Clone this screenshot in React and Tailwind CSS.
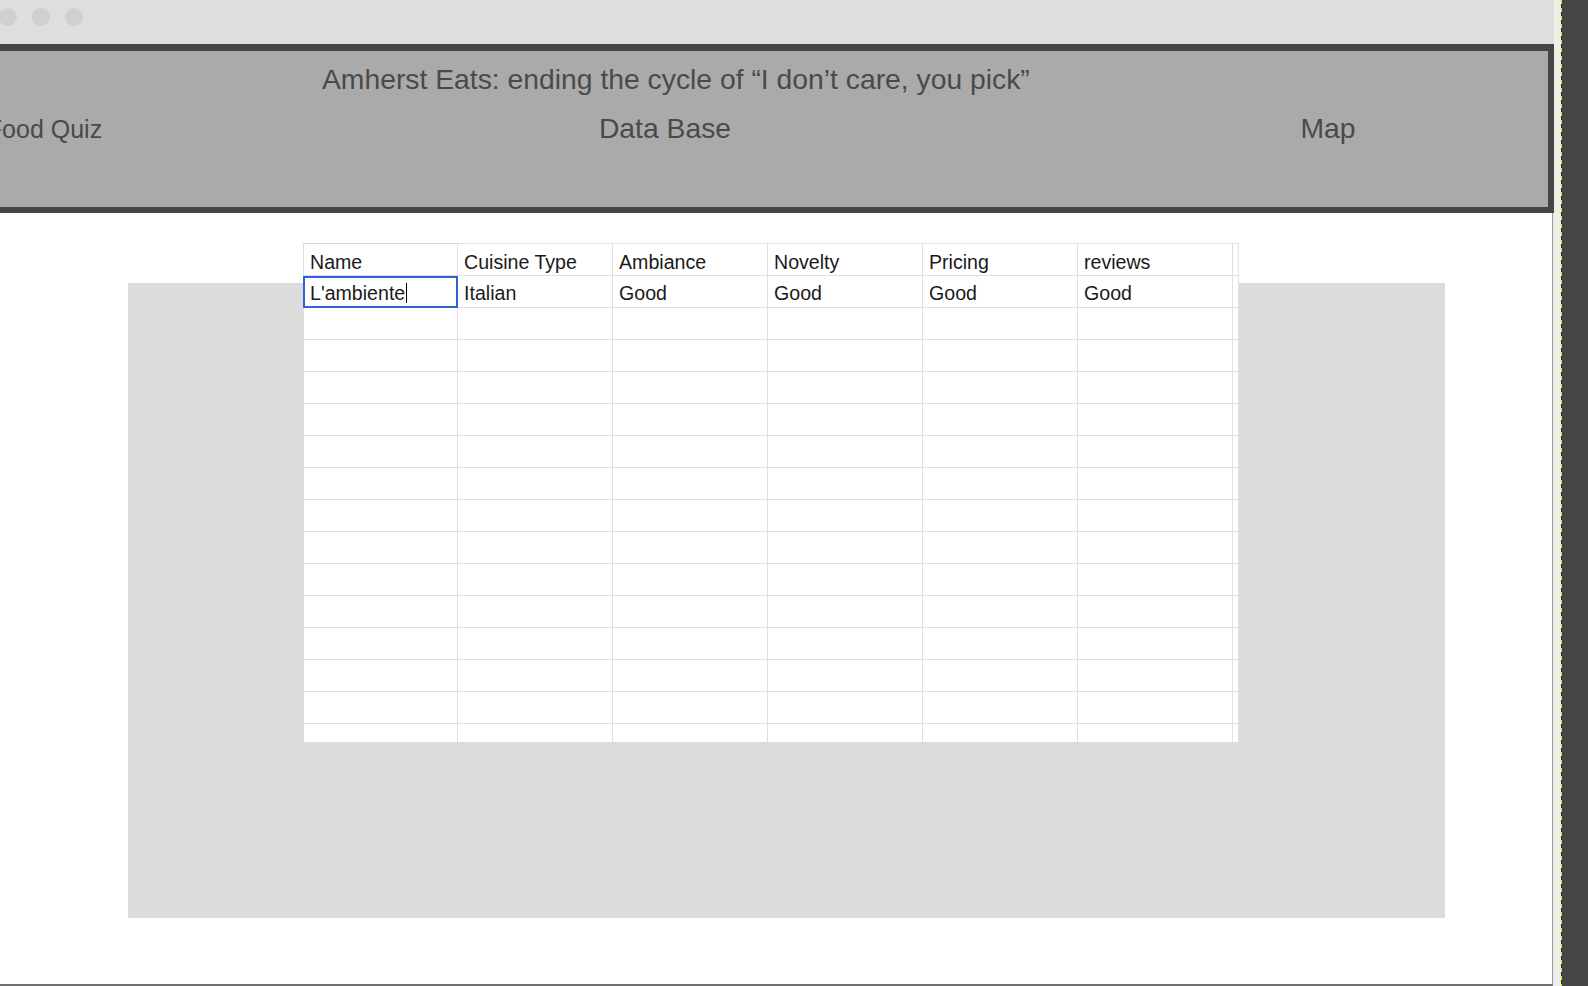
import React from "react";

const headers = ["Name", "Cuisine Type", "Ambiance", "Novelty", "Pricing", "reviews"];
const dataRow = ["L'ambiente", "Italian", "Good", "Good", "Good", "Good"];

function Cell({ children, first, selected, header }) {
  return (
    <div
      className={
        (header ? "h-[33px] pt-[8px] " : "h-[32px] pt-[7px] ") +
        "w-[155px] shrink-0 border-b border-r border-[#e0e0e0] px-[6px] text-[19.6px] leading-[20px] text-[#1a1a1a] whitespace-nowrap " +
        (first ? "border-l border-l-[#dcdcdc] " : "") +
        (header && first ? "border-t border-t-[#c9d6f2] " : header ? "border-t border-t-[#e3e3e3] " : "") +
        (selected ? "outline-2 outline-[#2f62d4] -outline-offset-2" : "")
      }
    >
      {children}
    </div>
  );
}

function Row({ cells, header, selectedFirst }) {
  return (
    <div className="flex">
      {cells.map((c, i) => (
        <Cell key={i} first={i === 0} header={header} selected={selectedFirst && i === 0}>
          {selectedFirst && i === 0 ? (
            <span className="inline-flex items-center">
              {c}
              <span className="ml-[1px] inline-block h-[20px] w-[1px] bg-black" />
            </span>
          ) : (
            c
          )}
        </Cell>
      ))}
      <div
        className={
          (header ? "h-[33px] border-t border-t-[#e3e3e3] " : "h-[32px] ") +
          "w-[6px] shrink-0 border-b border-r border-[#e0e0e0]"
        }
      />
    </div>
  );
}

export default function App() {
  const empty = ["", "", "", "", "", ""];
  return (
    <div
      className="flex h-[986px] w-[1588px] overflow-hidden bg-[#eeeeee]"
      style={{ fontFamily: '"Liberation Sans", Arial, sans-serif' }}
    >
      {/* main window column */}
      <div className="flex w-[1554px] shrink-0 flex-col">
        {/* title bar */}
        <div className="flex h-[44px] items-start gap-[15px] bg-[#dedede] pt-[8px]">
          <div className="-ml-[1px] h-[18px] w-[18px] rounded-full bg-[#d0d0d0]" />
          <div className="h-[18px] w-[18px] rounded-full bg-[#d0d0d0]" />
          <div className="h-[18px] w-[18px] rounded-full bg-[#d0d0d0]" />
        </div>

        {/* header */}
        <div className="h-[169px] border-t-[7px] border-r-[6px] border-b-[6px] border-[#454545] bg-[#aaaaaa] pt-[12px] text-[28.3px] leading-[32px] text-[#4a4a4a]">
          <div className="pl-[322px] whitespace-nowrap">
            Amherst Eats: ending the cycle of “I don’t care, you pick”
          </div>
          <div className="mt-[17px] flex items-baseline whitespace-nowrap">
            <div className="flex w-[89px] shrink-0 justify-center text-[25px]">Food Quiz</div>
            <div className="ml-[496px] flex w-[160px] shrink-0 justify-center">Data Base</div>
            <div className="ml-[508px] flex w-[150px] shrink-0 justify-center">Map</div>
          </div>
        </div>

        {/* content */}
        <div className="h-[773px] w-[1553px] border-r border-b-2 border-r-[#9a9a9a] border-b-[#707070] bg-white pt-[70px]">
          <div className="ml-[128px] flex h-[635px] w-[1317px] flex-col bg-[#dcdcdc]">
            <div className="-mt-[40px] ml-[175px] w-[936px] bg-white">
              <Row cells={headers} header />
              <Row cells={dataRow} selectedFirst />
              {Array.from({ length: 13 }).map((_, i) => (
                <Row key={i} cells={empty} />
              ))}
              <div className="flex">
                {empty.map((_, i) => (
                  <div
                    key={i}
                    className={
                      "h-[18px] w-[155px] shrink-0 border-r border-[#e0e0e0] " +
                      (i === 0 ? "border-l border-l-[#dcdcdc]" : "")
                    }
                  />
                ))}
                <div className="h-[18px] w-[6px] shrink-0 border-r border-[#e0e0e0]" />
              </div>
            </div>
          </div>
        </div>
      </div>

      {/* right edge: light strip, dashed line, dark panel */}
      <div className="w-[7px] shrink-0 bg-[#eeeeee]" />
      <div className="w-[1px] shrink-0 bg-[repeating-linear-gradient(to_bottom,#e4e000_0px,#e4e000_4px,#222222_4px,#222222_8px)]" />
      <div className="flex-1 bg-[#464646]" />
    </div>
  );
}
